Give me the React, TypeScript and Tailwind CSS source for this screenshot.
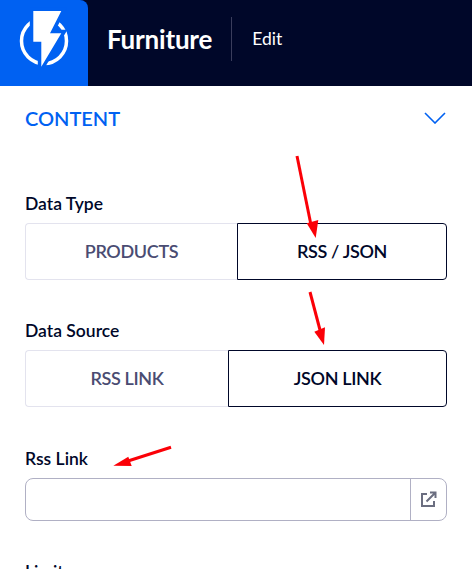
import React from "react";

const Logo = () => (
	<svg width="88" height="86" viewBox="0 0 88 86" fill="none">
		<circle cx="44" cy="41" r="22.5" stroke="#fff" strokeWidth="3.5" />
		<path d="M33.3 11H61.3L50 33.3H61.3L41.3 66.7V41.7H33.3Z" fill="#fff" stroke="#0061f2" strokeWidth="7" />
		<path d="M33.3 11H61.3L50 33.3H61.3L41.3 66.7V41.7H33.3Z" fill="#fff" />
	</svg>
);

const Arrows = () => (
	<svg className="absolute left-0 top-0 pointer-events-none" width="472" height="569" fill="none">
		<path d="M297 156L311 225" stroke="#fb0007" strokeWidth="3" />
		<path d="M306.7 223.3L318.3 220L315.7 238Z" fill="#fb0007" />
		<path d="M310 292L320 330" stroke="#fb0007" strokeWidth="3" />
		<path d="M314.3 331.7L325 327.3L324 345Z" fill="#fb0007" />
		<path d="M171 447.3L128 461" stroke="#fb0007" strokeWidth="3" />
		<path d="M128.3 456.7L131.7 466L113.3 465.7Z" fill="#fb0007" />
	</svg>
);

interface SegmentedProps {
	label: string;
	left: string;
	right: string;
	leftWidth: string;
}

const Segmented = ({ label, left, right, leftWidth }: SegmentedProps) => (
	<div>
		<p className="text-[17.5px] font-semibold leading-5 text-[#000729] mb-[9px]">{label}</p>
		<div className="flex h-[57px] text-[18px] font-semibold tracking-[-0.35px]">
			<div className={`${leftWidth} flex items-center justify-center border border-r-0 border-[#e3e3ee] rounded-l text-[#4a4c72]`}>
				{left}
			</div>
			<div className="flex-1 flex items-center justify-center border border-[#000729] rounded-r text-[#000729]">
				{right}
			</div>
		</div>
	</div>
);

export default function App() {
	return (
		<div className="relative h-[569px] overflow-hidden bg-white font-['Lato',sans-serif]">
			<header className="flex h-[86px] bg-[#000729]">
				<div className="w-[88px] bg-[#0061f2] rounded-tr-lg">
					<Logo />
				</div>
				<div className="flex items-center pl-[19px] pb-2 text-white">
					<h1 className="text-[26px] font-bold tracking-[-0.2px]">Furniture</h1>
					<div className="ml-[19px] mr-5 h-11 w-px bg-[#3a3d5c]" />
					<span className="text-[17.5px]">Edit</span>
				</div>
			</header>

			<main className="px-[25px]">
				<div className="flex items-center justify-between h-[64px] text-[#0061f2]">
					<span className="text-xl font-semibold">CONTENT</span>
					<svg className="mr-px" width="22" height="12" viewBox="0 0 22 12" fill="none" stroke="currentColor" strokeWidth="1.6">
						<path d="M1 1L11 11L21 1" />
					</svg>
				</div>

				<div className="mt-[44px] flex flex-col gap-[41px]">
					<Segmented label="Data Type" left="PRODUCTS" right="RSS / JSON" leftWidth="w-[212px]" />
					<Segmented label="Data Source" left="RSS LINK" right="JSON LINK" leftWidth="w-[203px]" />
					<div className="mt-px">
						<p className="text-[17.5px] font-semibold leading-5 text-[#000729] mb-[9px]">Rss Link</p>
						<div className="flex h-[43px] border border-[#b0b0c4] rounded-lg">
							<div className="flex-1" />
							<div className="w-9 flex items-center justify-center border-l border-[#b0b0c4] text-[#6b6e80]">
								<svg width="17" height="17" viewBox="0 0 17 17" fill="none" stroke="currentColor" strokeWidth="2">
									<path d="M7 3H2V15H14V10" />
									<path d="M6.5 10.5L15 2M10 1.5H15.5V7" />
								</svg>
							</div>
						</div>
					</div>
					<p className="text-[17.5px] font-semibold leading-5 text-[#000729]">Limit</p>
				</div>
			</main>

			<Arrows />
		</div>
	);
}
